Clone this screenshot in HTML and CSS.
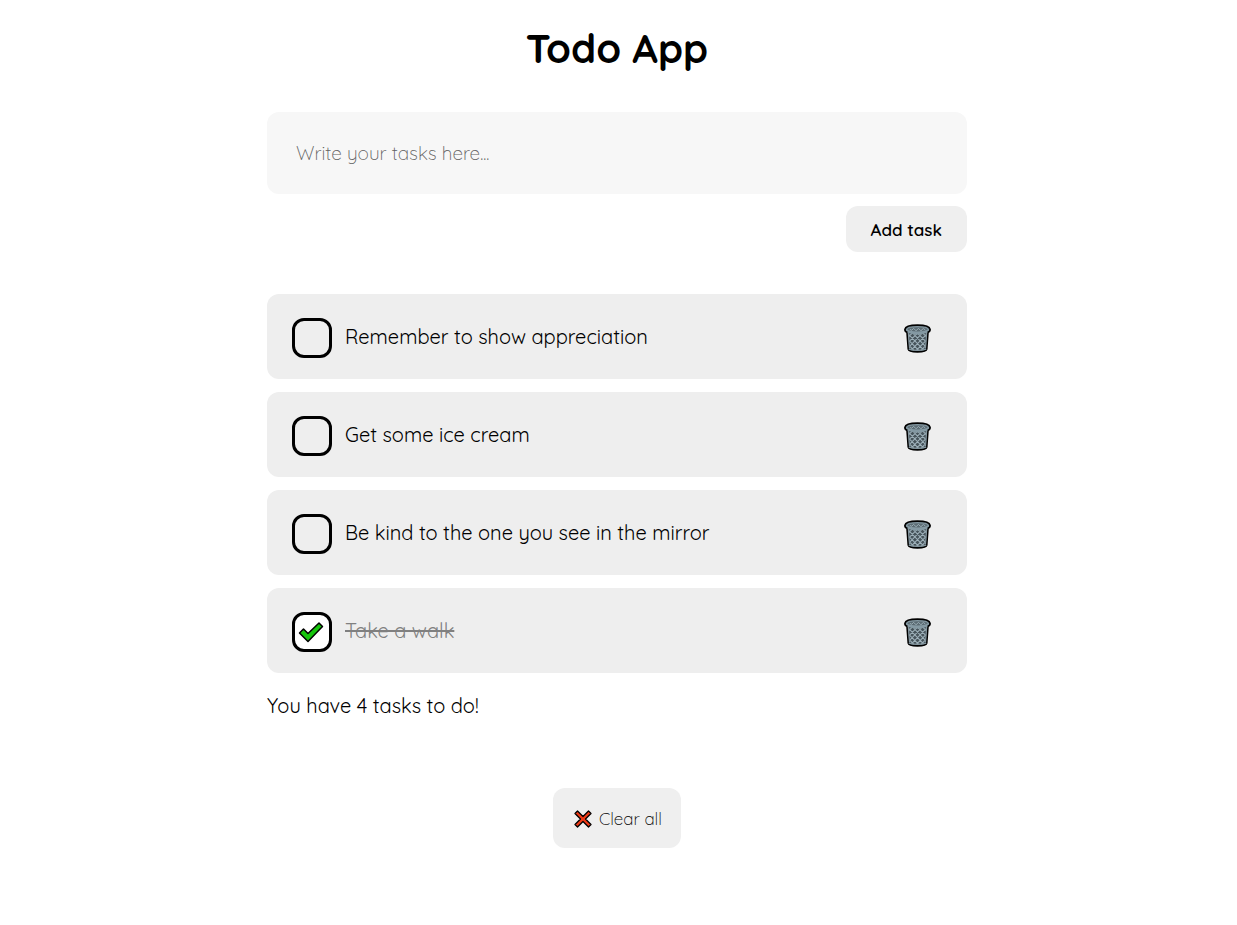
FILE: index.html
```html
<!DOCTYPE html>
<html lang="en">
<head>
<meta charset="utf-8">
<meta name="viewport" content="width=device-width, initial-scale=1">
<title>Todo App</title>
<link rel="stylesheet" href="styles.css">
</head>
<body>
<svg class="sprite" aria-hidden="true">
  <symbol id="bin" viewBox="0 0 28 30">
    <path d="M3 6l1.500 20q.3 2.800 9.500 2.800t9.500-2.800L25 6z" fill="#46535a" stroke="#000" stroke-width="1.800" stroke-linejoin="round"/>
    <path d="M5 13l4-4M5.500 18l8-8M6 23l12-12.500M8 26.500l15-15.500M13 27l9.500-9.500M18 27l4-4M23 13l-4-4M22.500 18l-8-8M22 23L10 10.500M20 26.500L5 11M15 27l-9.500-9.500M10 27l-4-4" stroke="#9db0b9" stroke-width="1.100"/>
    <path d="M5 26q9 2.500 18 0M4.500 9l1.200 16M23.500 9l-1.200 16" fill="none" stroke="#83959e" stroke-width="1.200"/>
    <path d="M1 5.500C1.500 2.500 7 1.200 14 1.200S26.500 2.500 27 5.500c0 2-.7 2.800-2 3H3C1.700 8.300 1 7.500 1 5.500z" fill="#8499a3" stroke="#000" stroke-width="1.800" stroke-linejoin="round"/>
    <path d="M3.600 7h20.800v2Q14 12.500 3.600 9z" fill="#8499a3"/>
    <ellipse cx="14" cy="5.500" rx="10.500" ry="2.200" fill="#5b6b73"/>
    <path d="M6 5.500l2 1 2-2 2.500 2.500L15 4.500 17.500 7 20 4.700l2 1.300" fill="none" stroke="#9db0b9"/>
  </symbol>
</svg>
<main class="app">
  <h1 class="title">Todo App</h1>
  <form class="composer">
    <input class="task-input" type="text" placeholder="Write your tasks here..." aria-label="New task">
    <button class="add" type="button">Add task</button>
  </form>
  <ul class="tasks">
    <li class="task">
      <label class="task-label"><input class="check" type="checkbox"><span class="task-text">Remember to show appreciation</span></label>
      <button class="delete" type="button" aria-label="Delete task"><svg class="bin"><use href="#bin"/></svg></button>
    </li>
    <li class="task">
      <label class="task-label"><input class="check" type="checkbox"><span class="task-text">Get some ice cream</span></label>
      <button class="delete" type="button" aria-label="Delete task"><svg class="bin"><use href="#bin"/></svg></button>
    </li>
    <li class="task">
      <label class="task-label"><input class="check" type="checkbox"><span class="task-text">Be kind to the one you see in the mirror</span></label>
      <button class="delete" type="button" aria-label="Delete task"><svg class="bin"><use href="#bin"/></svg></button>
    </li>
    <li class="task">
      <label class="task-label"><span class="check-wrap"><input class="check" type="checkbox" checked><svg class="tick" viewBox="0 0 28 22"><path d="M1.500 12l4-4L10 12.500 21 2l3.500 3.500L10 20.500z" fill="#16c60c" stroke="#000" stroke-width="1.500" stroke-linejoin="round"/></svg></span><span class="task-text">Take a walk</span></label>
      <button class="delete" type="button" aria-label="Delete task"><svg class="bin"><use href="#bin"/></svg></button>
    </li>
  </ul>
  <p class="summary">You have 4 tasks to do!</p>
  <button class="clear" type="button"><svg class="cross" viewBox="0 0 18 18"><path d="M3.500 1L9 6.500 14.500 1 17 3.500 11.500 9l5.500 5.500-2.500 2.500L9 11.500 3.500 17 1 14.500 6.500 9 1 3.500z" fill="#f03a17" stroke="#000" stroke-width="1.300" stroke-linejoin="round"/></svg>Clear all</button>
</main>
</body>
</html>
```
FILE: styles.css
```css
* {
  box-sizing: border-box;
}

body {
  margin: 0;
  padding-right: 3px;
  background: #fff;
  color: #000;
  font-family: Quicksand, Lato, sans-serif;
  font-size: 20px;
  font-weight: 400;
  line-height: 26px;
}

button,
input {
  font: inherit;
  color: inherit;
  border: 0;
}

.sprite {
  position: absolute;
  width: 0;
  height: 0;
}

.app {
  display: flex;
  flex-direction: column;
  max-width: 700px;
  margin: 0 auto;
  padding: 24px 0;
}

.title {
  margin: 0 0 40px;
  font-size: 40px;
  font-weight: 700;
  line-height: 48px;
  text-align: center;
}

.composer {
  display: flex;
  flex-direction: column;
  gap: 12px;
}

.task-input {
  width: 100%;
  padding: 28px 29px;
  border-radius: 12px;
  background: #f7f7f7;
  font-size: 19px;
  font-weight: 300;
}

.task-input::placeholder {
  color: #606060;
  opacity: 1;
}

.add {
  align-self: flex-end;
  padding: 11px 25px 9px;
  border-radius: 12px;
  background: #efefef;
  font-size: 17px;
  font-weight: 600;
}

.tasks {
  display: flex;
  flex-direction: column;
  gap: 13px;
  margin: 42px 0 20px;
  padding: 0;
  list-style: none;
}

.task {
  display: flex;
  align-items: center;
  justify-content: space-between;
  padding: 22px 35px 20px 25px;
  border-radius: 12px;
  background: #eee;
}

.task-label {
  display: flex;
  align-items: center;
  gap: 13px;
}

.task-text {
  padding-bottom: 2px;
}

.check {
  appearance: none;
  display: block;
  width: 40px;
  height: 40px;
  margin: 2px 0 1px;
  border: 3px solid #000;
  border-radius: 12px;
}

.check:checked {
  background: #fff;
}

.check-wrap {
  display: grid;
  place-items: center;
}

.check-wrap > * {
  grid-area: 1 / 1;
}

.tick {
  width: 28px;
  height: 22px;
  pointer-events: none;
}

.check-wrap + .task-text {
  color: #808080;
  text-decoration: line-through;
}

.delete {
  padding: 7px 0 5px;
  background: none;
}

.bin {
  display: block;
  width: 29px;
  height: 29px;
}

.summary {
  margin: 0 0 69px;
}

.clear {
  display: flex;
  align-items: center;
  align-self: center;
  gap: 7px;
  padding: 18px 19px 16px 21px;
  border-radius: 12px;
  background: #efefef;
  font-size: 17px;
  font-weight: 300;
}

.cross {
  width: 18px;
  height: 18px;
}
```
